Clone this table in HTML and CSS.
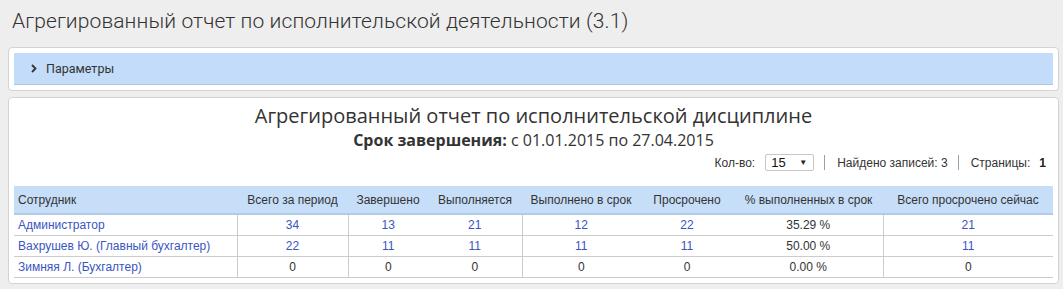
FILE: index.html
```html
<!DOCTYPE html>
<html lang="ru">
<head>
<meta charset="utf-8">
<title>Агрегированный отчет</title>
<link rel="stylesheet" href="styles.css">
</head>
<body>
<h1 class="page-title">Агрегированный отчет по исполнительской деятельности (3.1)</h1>

<div class="panel params">
  <div class="params-bar">
    <svg class="chev" width="6" height="9" viewBox="0 0 6 9"><path d="M1 1 L4.5 4.5 L1 8" fill="none" stroke="#333" stroke-width="1.8"/></svg>
    <span>Параметры</span>
  </div>
</div>

<div class="panel report">
  <div class="report-title">Агрегированный отчет по исполнительской дисциплине</div>
  <div class="report-sub"><b>Срок завершения:</b> с 01.01.2015 по 27.04.2015</div>
  <div class="toolbar">
    <span class="lbl">Кол-во:</span>
    <span class="select"><span class="val">15</span><span class="arrow">▼</span></span>
    <span class="sep"></span>
    <span class="lbl">Найдено записей: 3</span>
    <span class="sep"></span>
    <span class="lbl">Страницы:</span>
    <b class="page">1</b>
  </div>
  <table class="grid">
    <colgroup>
      <col class="c1"><col class="c2"><col class="c3"><col class="c4"><col class="c5"><col class="c6"><col class="c7"><col class="c8">
    </colgroup>
    <thead>
      <tr>
        <th class="left">Сотрудник</th>
        <th>Всего за период</th>
        <th>Завершено</th>
        <th>Выполняется</th>
        <th>Выполнено в срок</th>
        <th>Просрочено</th>
        <th>% выполненных в срок</th>
        <th>Всего просрочено сейчас</th>
      </tr>
    </thead>
    <tbody>
      <tr>
        <td class="left br"><a href="#">Администратор</a></td>
        <td class="br"><a href="#">34</a></td>
        <td><a href="#">13</a></td>
        <td class="br"><a href="#">21</a></td>
        <td><a href="#">12</a></td>
        <td><a href="#">22</a></td>
        <td class="br">35.29 %</td>
        <td><a href="#">21</a></td>
      </tr>
      <tr>
        <td class="left br"><a href="#">Вахрушев Ю. (Главный бухгалтер)</a></td>
        <td class="br"><a href="#">22</a></td>
        <td><a href="#">11</a></td>
        <td class="br"><a href="#">11</a></td>
        <td><a href="#">11</a></td>
        <td><a href="#">11</a></td>
        <td class="br">50.00 %</td>
        <td><a href="#">11</a></td>
      </tr>
      <tr>
        <td class="left br"><a href="#">Зимняя Л. (Бухгалтер)</a></td>
        <td class="br">0</td>
        <td>0</td>
        <td class="br">0</td>
        <td>0</td>
        <td>0</td>
        <td class="br">0.00 %</td>
        <td>0</td>
      </tr>
    </tbody>
  </table>
</div>
</body>
</html>
```

FILE: styles.css
```css
html, body {
  margin: 0;
  padding: 0;
  background: #eeeeee;
  color: #333;
  font-family: "Liberation Sans", Arial, sans-serif;
  font-size: 12px;
}

.page-title {
  margin: 0;
  padding: 6px 12px 11px;
  font-family: Roboto, "Open Sans", sans-serif;
  font-weight: 300;
  font-size: 21px;
  letter-spacing: 0.1px;
  line-height: 30px;
  color: #333;
}

.panel {
  background: #fff;
  border: 1px solid #d3d3d3;
  border-radius: 4px;
  margin: 0 4px 0 8px;
  padding: 5px;
}

.params {
  margin-bottom: 6px;
}

.params-bar {
  background: #c2dcfa;
  border-bottom: 1px solid #abc8ea;
  height: 31px;
  display: flex;
  align-items: center;
  padding-left: 17px;
  font-family: Roboto, "Liberation Sans", sans-serif;
  font-size: 12.5px;
  color: #333;
}

.chev {
  margin-right: 9px;
}

.report-title {
  text-align: center;
  font-family: "Open Sans", sans-serif;
  font-size: 20px;
  line-height: 26px;
  color: #333;
}

.report-sub {
  text-align: center;
  font-family: "Open Sans", sans-serif;
  font-size: 16px;
  line-height: 22px;
  color: #333;
}

.toolbar {
  display: flex;
  justify-content: flex-end;
  align-items: center;
  height: 23px;
  padding-right: 7px;
  margin-bottom: 12px;
  font-size: 12px;
  color: #333;
}

.select {
  display: inline-flex;
  align-items: center;
  justify-content: space-between;
  box-sizing: border-box;
  width: 49px;
  height: 17px;
  margin-left: 10px;
  padding: 0 6px 0 5px;
  border: 1px solid #c8c8c8;
  border-radius: 2px;
  background: #fff;
  font-size: 13px;
  color: #111;
}

.select .arrow {
  font-size: 8px;
  color: #222;
}

.sep {
  width: 1px;
  height: 15px;
  background: #9aa0a8;
  margin: 0 12px 0 10px;
}

.page {
  margin-left: 9px;
  color: #222;
}

.grid {
  width: 100%;
  border-collapse: collapse;
  table-layout: fixed;
}

.c1 { width: 223px; }
.c2 { width: 111px; }
.c3 { width: 80px; }
.c4 { width: 94px; }
.c5 { width: 118px; }
.c6 { width: 94px; }
.c7 { width: 149px; }
.c8 { width: 170px; }

.grid th {
  background: #c7def9;
  border-bottom: 2px solid #b2cbe8;
  font-weight: normal;
  height: 27px;
  padding: 0;
  text-align: center;
  white-space: nowrap;
  color: #333;
}

.grid td {
  height: 20px;
  padding: 0;
  line-height: 20px;
  text-align: center;
  border-bottom: 1px solid #cccccc;
  white-space: nowrap;
}

.grid .left {
  text-align: left;
  padding-left: 4px;
}

.grid td.br {
  border-right: 1px solid #cccccc;
}

.grid a {
  color: #3a55c2;
  text-decoration: none;
}
```
